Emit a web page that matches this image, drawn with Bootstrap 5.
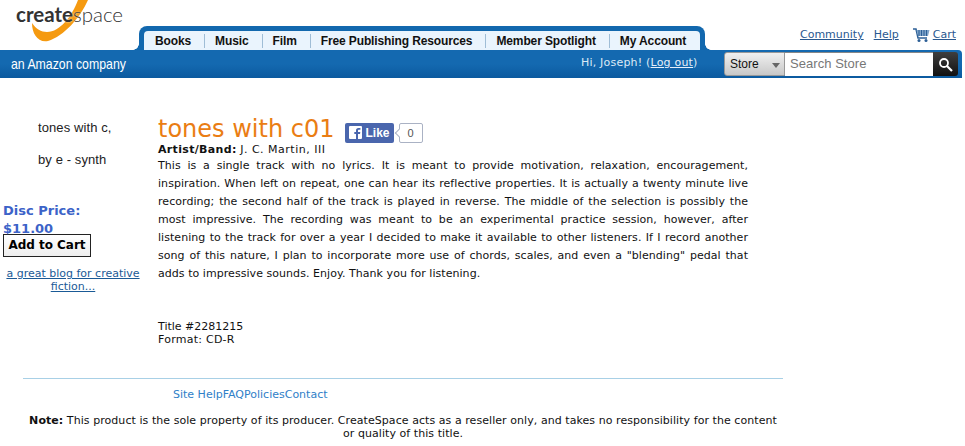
<!DOCTYPE html>
<html lang="en">
<head>
  <meta charset="UTF-8">
  <meta name="viewport" content="width=device-width, initial-scale=1">
  <title>tones with c01</title>
  <link href="https://cdn.jsdelivr.net/npm/bootstrap@5.3.0/dist/css/bootstrap.min.css" rel="stylesheet">
  <style>
    body { font-family: "DejaVu Sans", sans-serif; font-size: 11px; color: #111; background: #fff; line-height: 13px; }
    a { color: #1a5a96; }
    .top-strip { height: 50px; }
    .logo-box { width: 139px; height: 50px; position: relative; flex: none; overflow: hidden; }
    .logo-swoosh { position: absolute; left: 0; top: 0; }
    .logo-word { position: absolute; left: 16px; top: 0; font-family: "Lato", sans-serif; font-size: 20.500px; line-height: 28px; color: #333; white-space: nowrap; text-shadow: 0 0 2px #fff; }
    .logo-word b { font-weight: 700; }
    .logo-word span { font-weight: 300; }
    .tab-shell { width: 566px; height: 24px; margin-top: 26px; padding: 5px 5px 0; background: #1268ae; border-radius: 8px 8px 0 0; flex: none; position: relative; }
    .tab-shell::before, .tab-shell::after { content: ""; position: absolute; bottom: 0; width: 6px; height: 6px; }
    .tab-shell::before { left: -6px; background: radial-gradient(circle at 0 0, transparent 5.500px, #1268ae 6px); }
    .tab-shell::after { right: -6px; background: radial-gradient(circle at 100% 0, transparent 5.500px, #1268ae 6px); }
    .tab-row { height: 19px; background: #eaf4fd; border-radius: 4px 4px 0 0; padding: 3px 0 2px 1px; }
    .tab-row a { font-family: "Liberation Sans", sans-serif; font-weight: 700; font-size: 12px; letter-spacing: -0.12px; line-height: 14px; color: #111; text-decoration: none; padding: 0 13px 0 10px; border-right: 1px solid #9fbdd6; white-space: nowrap; }
    .tab-row a:last-child { border-right: 0; }
    .util-links { margin-left: auto; padding: 28px 9px 0 0; font-size: 11px; gap: 10px; }
    .util-links a { color: #29588f; }
    .cart-link { gap: 3px; margin-left: 4px; }
    .blue-bar { height: 28px; width: 962px; border-radius: 0 4px 0 0; background: linear-gradient(#1469b0 0, #1469b0 50%, #0b5a9f 100%); color: #dde9f5; }
    .amazon-line { font-family: "Liberation Sans", sans-serif; font-size: 15px; color: #fff; padding-left: 11px; width: 581px; margin-top: -2px; }
    .amazon-line span { display: inline-block; transform: scaleX(.82); transform-origin: left; white-space: nowrap; }
    .hi-line { width: 143px; font-size: 11px; letter-spacing: .2px; margin-top: -3px; }
    .hi-line a { color: #e6f0fa; }
    .search-group { height: 24px; width: 234px; }
    .store-pick { width: 61px; background: linear-gradient(#f0f0f0, #c8c8c8); border: 1px solid #999; border-radius: 3px 0 0 3px; font-family: "Liberation Sans", sans-serif; font-size: 12px; color: #111; padding-left: 5px; position: relative; line-height: 22px; }
    .store-pick::after { content: ""; position: absolute; right: 4px; top: 10px; border-left: 4px solid transparent; border-right: 4px solid transparent; border-top: 5px solid #666; }
    .search-field { width: 148px; background: #fff; border-top: 1px solid #888; font-family: "Liberation Sans", sans-serif; font-size: 13px; letter-spacing: .05px; color: #777; padding-left: 5px; line-height: 21px; }
    .search-go { width: 25px; background: linear-gradient(#3e3e3e, #111); border-radius: 0 3px 3px 0; }
    .side-col { width: 146px; flex: none; padding-top: 43px; }
    .side-note { font-family: "Liberation Sans", sans-serif; font-size: 13px; letter-spacing: .1px; line-height: 14px; color: #222; padding-left: 38px; margin: 0 0 18px; }
    .price-lbl { font-weight: 700; font-size: 13px; line-height: 18px; color: #3c63c8; padding-left: 3px; margin-top: 35px; }
    .cart-btn { font-family: "DejaVu Sans", sans-serif; font-weight: 700; font-size: 12px; letter-spacing: -0.02px; line-height: 17px; color: #000; margin: -4px 0 0 3px; padding: 2px 0; border: 1px solid #222; background: linear-gradient(#fff, #eee); border-radius: 0; display: block; width: 88px; height: 23px; white-space: nowrap; text-align: center; }
    .blog-link { text-align: center; margin-top: 10px; line-height: 13px; }
    .main-col { width: 590px; margin-left: 12px; padding-top: 37px; }
    .page-title { font-family: "DejaVu Sans", sans-serif; font-size: 24px; font-weight: 400; line-height: 28px; color: #ea7d13; margin: 0; }
    .fb-like { font-family: "Liberation Sans", sans-serif; font-weight: 700; font-size: 12px; color: #fff; background: #4a66ad; border-radius: 2px; height: 20px; line-height: 20px; padding: 0 4px; margin-left: 11px; align-self: flex-end; }
    .fb-like svg { margin-right: 3px; vertical-align: -2px; }
    .fb-count { border: 1px solid #aab2c4; height: 20px; line-height: 18px; padding: 0 8px; margin-left: 5px; font-size: 11px; color: #555; border-radius: 2px; font-family: "Liberation Sans", sans-serif; position: relative; align-self: flex-end; }
    .fb-count::before { content: ""; position: absolute; left: -4px; top: 6px; width: 6px; height: 6px; background: #fff; border-left: 1px solid #aab2c4; border-bottom: 1px solid #aab2c4; transform: rotate(45deg); }
    .artist-key { letter-spacing: .33px; }
    .artist-val { letter-spacing: .5px; }
    .blurb { text-align: justify; line-height: 18px; margin: 1px 0 37px; letter-spacing: .05px; }
    .format-line { letter-spacing: .25px; }
    .foot-wrap { width: 760px; margin: 32px 0 0 23px; border-top: 1px solid #a8d0e6; padding-top: 9px; }
    .foot-links { padding-left: 150px; margin-bottom: 13px; }
    .foot-links a { color: #2f80c8; text-decoration: none; }
    .foot-note { text-align: center; letter-spacing: .06px; }
  </style>
</head>
<body>

<!-- Header -->
<div class="top-strip d-flex">
  <div class="logo-box">
    <svg class="logo-swoosh" width="100" height="46" viewBox="0 0 100 46">
      <path d="M32 23C36 29 41 32 47 32C60 32 72 16 78 0L88 0C80 18 64 36 48 41C38 43 32 34 32 23Z" fill="#f59a10"/>
    </svg>
    <div class="logo-word"><b>create</b><span>space</span></div>
  </div>
  <div class="tab-shell">
    <div class="tab-row d-flex">
      <a href="#">Books</a>
      <a href="#">Music</a>
      <a href="#">Film</a>
      <a href="#">Free Publishing Resources</a>
      <a href="#">Member Spotlight</a>
      <a href="#">My Account</a>
    </div>
  </div>
  <div class="util-links d-flex">
    <a href="#">Community</a>
    <a href="#">Help</a>
    <span class="cart-link d-flex">
      <svg width="17" height="14" viewBox="0 0 17 14"><path d="M0 1H3L5 10H14" fill="none" stroke="#2c5f96" stroke-width="1.500"/><path d="M3.500 2H16.500L15 8H5Z" fill="#7fa3c8"/><path d="M6 2V8M8.500 2V8M11 2V8M13.500 2V8" stroke="#2c5f96"/><circle cx="6" cy="12.500" r="1.500" fill="#2c5f96"/><circle cx="13" cy="12.500" r="1.500" fill="#2c5f96"/></svg>
      <a href="#">Cart</a>
    </span>
  </div>
</div>
<div class="blue-bar d-flex align-items-center">
  <div class="amazon-line"><span>an Amazon company</span></div>
  <div class="hi-line">Hi, Joseph! (<a href="#">Log out</a>)</div>
  <div class="search-group d-flex">
    <div class="store-pick">Store</div>
    <div class="search-field">Search Store</div>
    <div class="search-go d-flex align-items-center justify-content-center">
      <svg width="15" height="15" viewBox="0 0 15 15"><circle cx="6" cy="6" r="4" fill="none" stroke="#fff" stroke-width="1.800"/><path d="M9 9L14 14" stroke="#fff" stroke-width="2.200"/></svg>
    </div>
  </div>
</div>

<!-- Product -->
<div class="d-flex">
  <div class="side-col">
    <p class="side-note">tones with c,</p>
    <p class="side-note">by e - synth</p>
    <div class="price-lbl">Disc Price:<br>$11.00</div>
    <button class="btn cart-btn" type="button">Add to Cart</button>
    <div class="blog-link"><a href="#">a great blog for creative fiction...</a></div>
  </div>
  <div class="main-col">
    <div class="d-flex align-items-center">
      <h1 class="page-title">tones with c01</h1>
      <span class="fb-like"><svg width="13" height="13" viewBox="0 0 13 13"><path d="M1 0H12A1 1 0 0 1 13 1V12A1 1 0 0 1 12 13H9V8H11L11.300 6H9V4.800C9 4.100 9.300 3.800 10 3.800H11.400V2H9.600C7.700 2 7 3 7 4.600V6H5.300V8H7V13H1A1 1 0 0 1 0 12V1A1 1 0 0 1 1 0Z" fill="#fff"/></svg>Like</span>
      <span class="fb-count">0</span>
    </div>
    <div><b class="artist-key">Artist/Band:</b> <span class="artist-val">J. C. Martin, III</span></div>
    <p class="blurb">This is a single track with no lyrics. It is meant to provide motivation, relaxation, encouragement, inspiration. When left on repeat, one can hear its reflective properties. It is actually a twenty minute live recording; the second half of the track is played in reverse. The middle of the selection is possibly the most impressive. The recording was meant to be an experimental practice session, however, after listening to the track for over a year I decided to make it available to other listeners. If I record another song of this nature, I plan to incorporate more use of chords, scales, and even a "blending" pedal that adds to impressive sounds. Enjoy. Thank you for listening.</p>
    <div>Title #2281215<br><span class="format-line">Format: CD-R</span></div>
  </div>
</div>

<!-- Footer -->
<div class="foot-wrap">
  <div class="foot-links"><a href="#">Site Help</a><a href="#">FAQ</a><a href="#">Policies</a><a href="#">Contact</a></div>
  <div class="foot-note"><b>Note:</b> This product is the sole property of its producer. CreateSpace acts as a reseller only, and takes no responsibility for the content or quality of this title.</div>
</div>

<script src="https://cdn.jsdelivr.net/npm/bootstrap@5.3.0/dist/js/bootstrap.bundle.min.js"></script>
</body>
</html>
